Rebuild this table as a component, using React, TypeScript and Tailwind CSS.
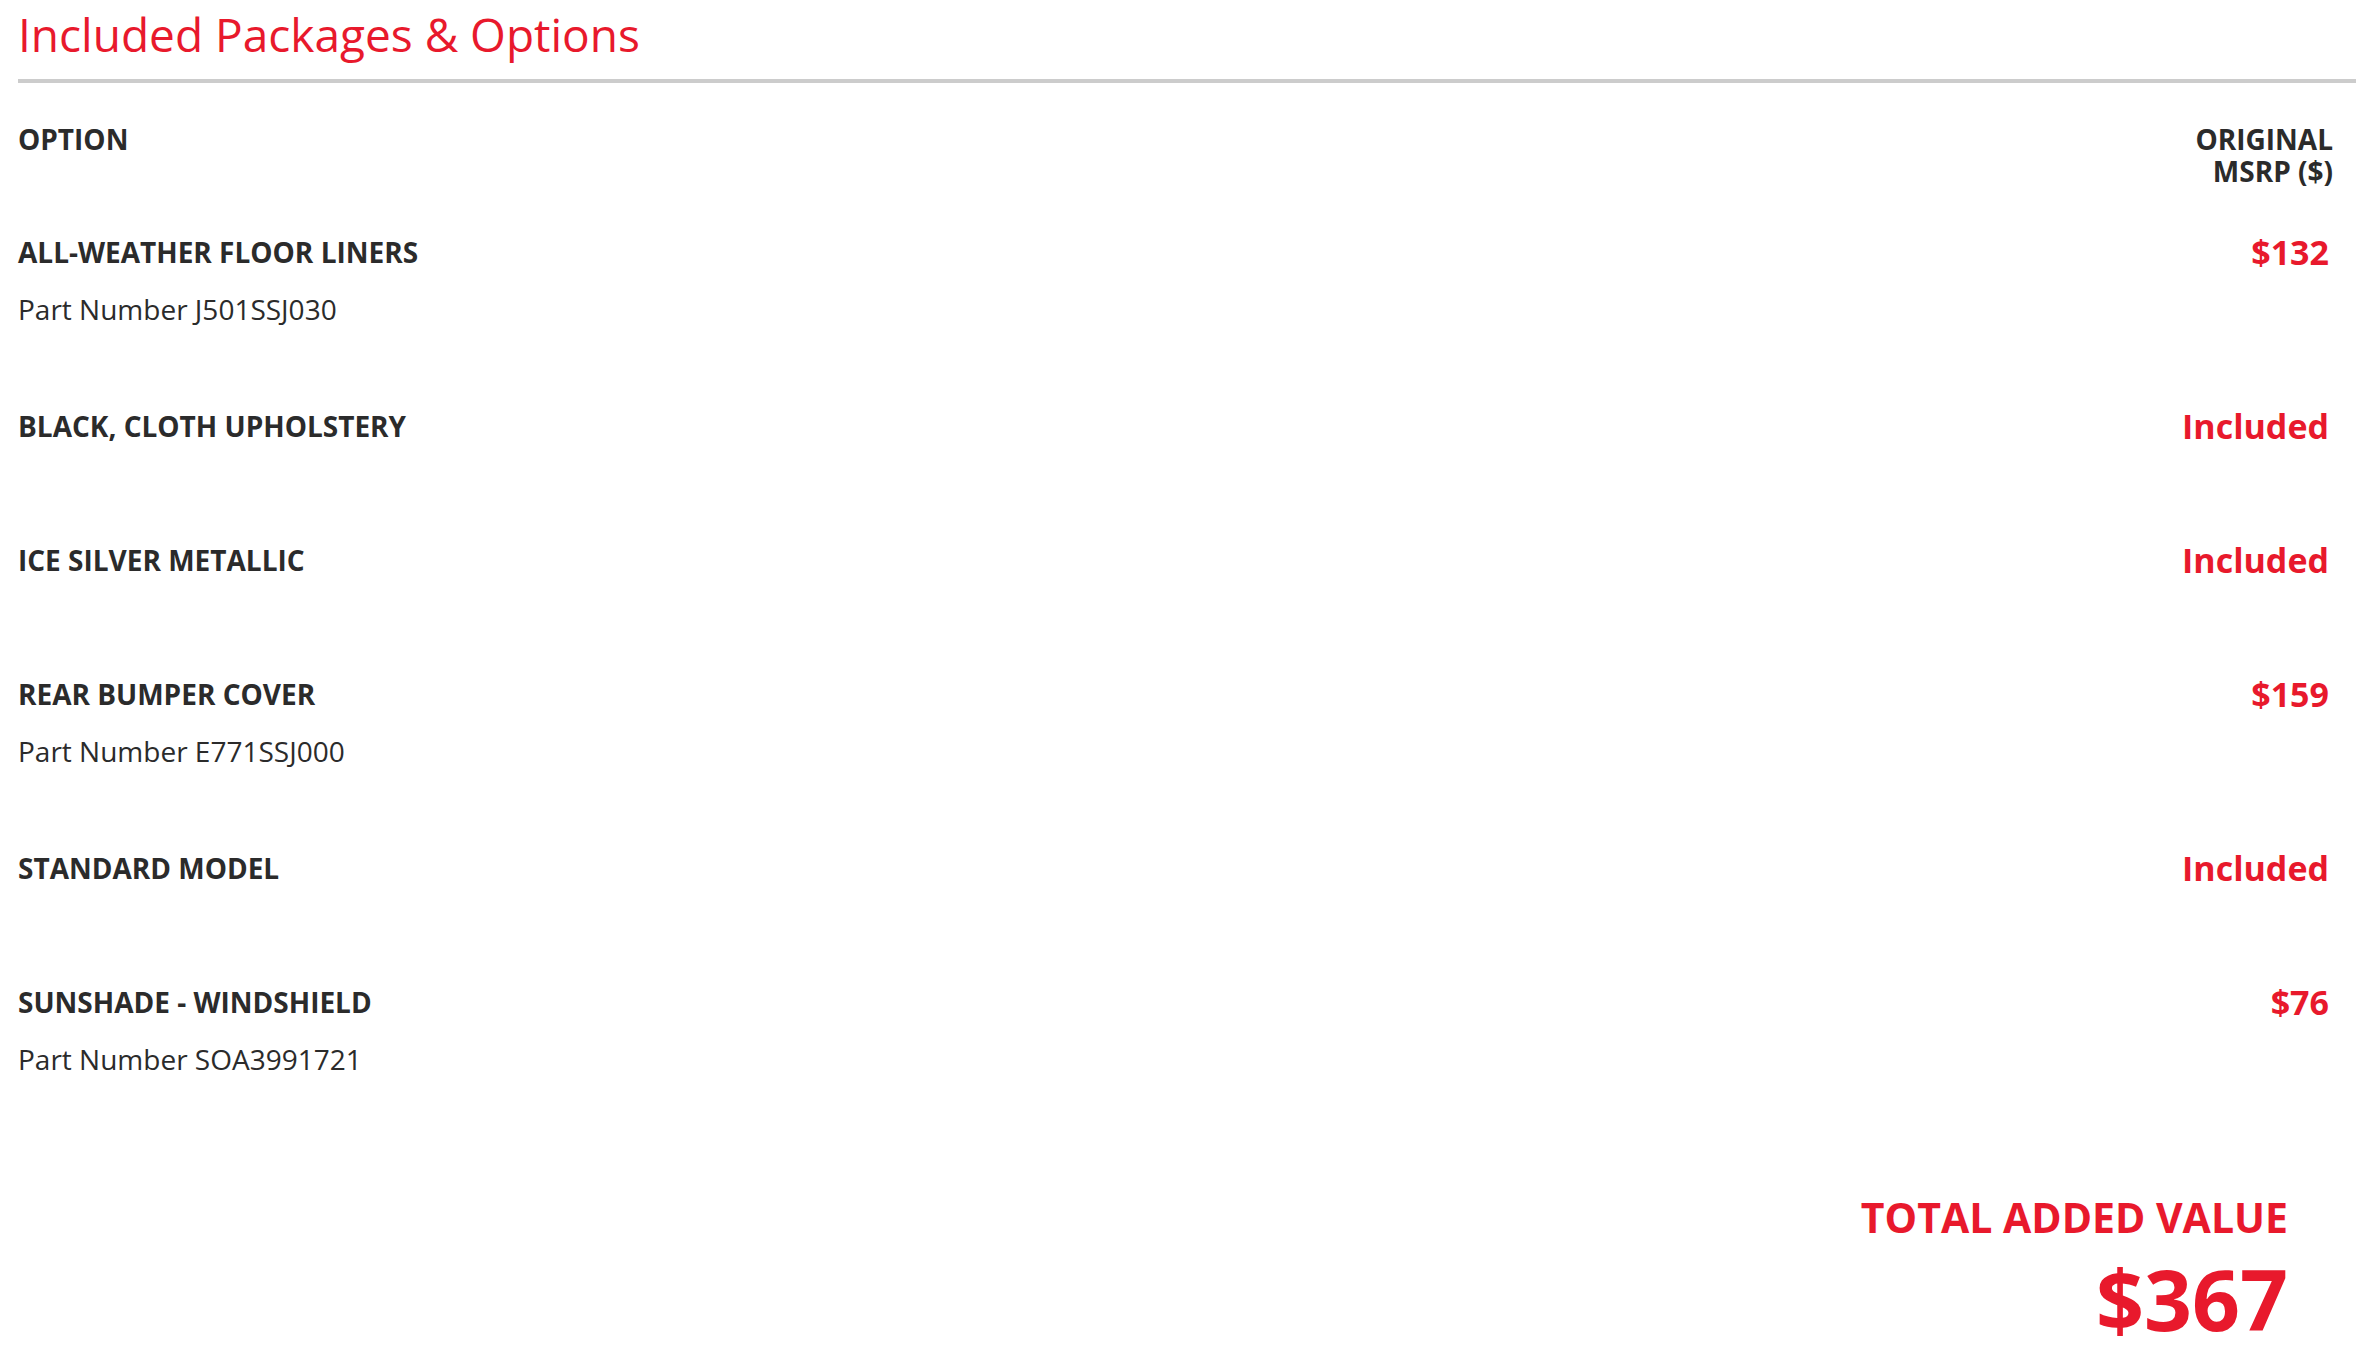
import React from "react";

type Row = { name: string; part?: string; price: string };

const rows: Row[] = [
  { name: "ALL-WEATHER FLOOR LINERS", part: "Part Number J501SSJ030", price: "$132" },
  { name: "BLACK, CLOTH UPHOLSTERY", price: "Included" },
  { name: "ICE SILVER METALLIC", price: "Included" },
  { name: "REAR BUMPER COVER", part: "Part Number E771SSJ000", price: "$159" },
  { name: "STANDARD MODEL", price: "Included" },
  { name: "SUNSHADE - WINDSHIELD", part: "Part Number SOA3991721", price: "$76" },
];

export default function App() {
  return (
    <div className="w-full min-h-[1368px] bg-white font-['Open_Sans',sans-serif] text-[#2b2b2b]">
      <h2 className="pl-[18px] pt-[6px] text-[46px] font-normal leading-[56px] text-[#e8192c]">
        Included Packages &amp; Options
      </h2>
      <div className="ml-[18px] mt-[17px] h-[4px] bg-[#cccccc]" />

      <div className="pl-[18px] pr-[23px]">
        <div className="flex items-start justify-between pt-[40px]">
          <div className="text-[28px] font-bold leading-[32px]">OPTION</div>
          <div className="text-right text-[28px] font-bold leading-[32px]">
            <div>ORIGINAL</div>
            <div>MSRP ($)</div>
          </div>
        </div>

        {rows.map((r) => (
          <div key={r.name} className="flex items-start justify-between py-[41px]">
            <div>
              <div className="pb-[4px] text-[28px] font-bold leading-[48px]">{r.name}</div>
              {r.part && (
                <div className="mt-[18px] text-[28px] font-normal leading-[22px]">{r.part}</div>
              )}
            </div>
            <div className="pr-[4px] pt-[2px] text-[34px] font-bold leading-[44px] text-[#e8192c]">
              {r.price}
            </div>
          </div>
        ))}
      </div>

      <div className="flex flex-col items-end pr-[68px] pt-[81px] text-[#e8192c]">
        <div className="text-[41px] font-bold leading-[50px]">TOTAL ADDED VALUE</div>
        <div className="mt-[7px] text-[84px] font-bold leading-[100px]">$367</div>
      </div>
    </div>
  );
}
